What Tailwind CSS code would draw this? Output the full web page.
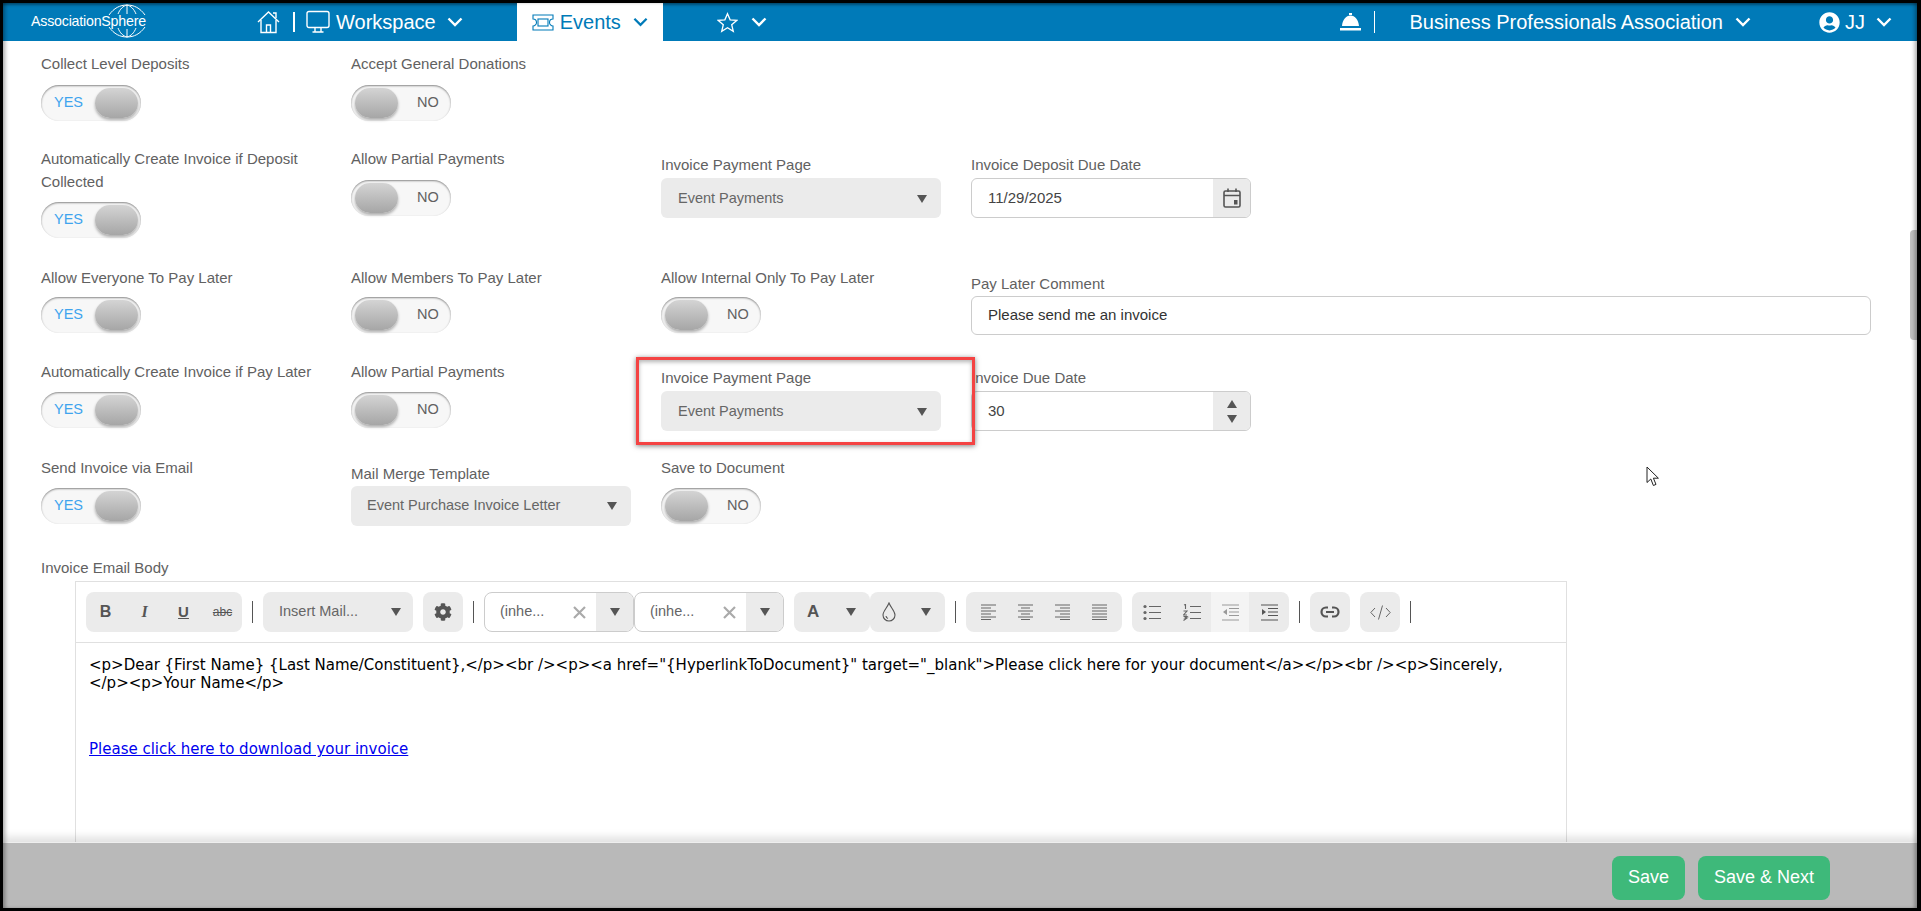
<!DOCTYPE html>
<html lang="en">
<head>
  <meta charset="UTF-8" />
  <title>Event Settings</title>
  <meta name="viewport" content="width=device-width, initial-scale=1.0" />
  <script src="https://cdn.jsdelivr.net/npm/@tailwindcss/browser@4"></script>
</head>
<body class="bg-black h-[911px] overflow-hidden font-['Liberation_Sans',Arial,sans-serif]">
<div class="relative h-[911px] border-t-[3px] border-l-[3px] border-r-[4px] border-b-[3px] border-black bg-white flex flex-col overflow-hidden">

  <!-- top nav -->
  <header class="h-[38px] shrink-0 bg-[#007ab8] text-white flex items-stretch text-[20px] shadow-[inset_0_3px_3px_-1px_rgba(0,0,0,0.35)]">
    <div class="w-[130px] ml-[28px] relative flex items-center shrink-0">
      <span class="text-[14.2px] tracking-[-0.2px] z-10">AssociationSphere</span>
      <svg class="absolute left-[75px] top-[1px] w-[42px] h-[34px]" viewBox="0 0 42 34" fill="none" stroke="white" stroke-width="1">
        <path d="M3 11 C8 4 14 1 21 1 C28 1 34 4 39 11" /><path d="M12 10 C14 5 17 2 21 1 C25 2 28 5 30 10" /><path d="M21 1 V10" />
        <path d="M3 23 C8 30 14 33 21 33 C28 33 34 30 39 23" /><path d="M12 24 C14 29 17 32 21 33 C25 32 28 29 30 24" /><path d="M21 25 V33" />
      </svg>
    </div>
    <svg class="w-[23px] h-[24px] ml-[96px] self-center shrink-0" viewBox="0 0 23 24" fill="none" stroke="white" stroke-width="1.4">
      <path d="M1 12 L11.5 2 L22 12" /><path d="M4 10 V22.5 H19 V10" /><path d="M9.5 22.5 V15 H13.5 V22.5" /><path d="M16 3 H19 V8" />
    </svg>
    <span class="w-[2px] h-[20px] bg-white ml-[13px] self-center shrink-0"></span>
    <svg class="w-[24px] h-[24px] ml-[11px] self-center shrink-0" viewBox="0 0 24 24" fill="none" stroke="white" stroke-width="1.4">
      <rect x="1" y="1.5" width="22" height="16" rx="2" /><path d="M9 18 V21.5 M15 18 V21.5 M6.5 22 H17.5" />
    </svg>
    <span class="ml-[6px] self-center">Workspace</span>
    <svg class="w-[16px] h-[10px] ml-[11px] self-center shrink-0" viewBox="0 0 16 10" fill="none" stroke="white" stroke-width="2.4"><path d="M1.5 1.5 L8 8 L14.5 1.5" /></svg>

    <div class="w-[146px] ml-[54px] bg-white text-[#007ab8] flex items-center shrink-0">
      <svg class="w-[22px] h-[17px] ml-[15px] shrink-0" viewBox="0 0 22 17" fill="none" stroke="#007ab8" stroke-width="1.1">
        <path d="M1 1 H21 V5 A3.5 3.5 0 0 0 21 12 V16 H1 V12 A3.5 3.5 0 0 0 1 5 Z" /><rect x="6" y="5" width="10" height="7" />
      </svg>
      <span class="ml-[6px]">Events</span>
      <svg class="w-[15px] h-[10px] ml-[12px] shrink-0" viewBox="0 0 16 10" fill="none" stroke="#007ab8" stroke-width="2.4"><path d="M1.5 1.5 L8 8 L14.5 1.5" /></svg>
    </div>

    <svg class="w-[21px] h-[21px] ml-[54px] self-center shrink-0" viewBox="0 0 24 24" fill="none" stroke="white" stroke-width="1.5">
      <path d="M12 2 L15 9 L22.5 9.6 L16.8 14.5 L18.6 22 L12 18 L5.4 22 L7.2 14.5 L1.5 9.6 L9 9 Z" />
    </svg>
    <svg class="w-[16px] h-[10px] ml-[13px] self-center shrink-0" viewBox="0 0 16 10" fill="none" stroke="white" stroke-width="2.4"><path d="M1.5 1.5 L8 8 L14.5 1.5" /></svg>

    <svg class="w-[21px] h-[18px] ml-auto self-center shrink-0" viewBox="0 0 21 18" fill="white">
      <path d="M9 0 H12 V2 H9 Z M10.5 2.5 C15 2.5 18.5 7 19 13 H2 C2.5 7 6 2.5 10.5 2.5 Z M0 15 H21 V17.5 H0 Z" />
    </svg>
    <span class="w-px h-[22px] bg-white ml-[13px] self-center shrink-0"></span>
    <span class="ml-[35px] self-center">Business Professionals Association</span>
    <svg class="w-[16px] h-[10px] ml-[12px] self-center shrink-0" viewBox="0 0 16 10" fill="none" stroke="white" stroke-width="2.4"><path d="M1.5 1.5 L8 8 L14.5 1.5" /></svg>
    <svg class="w-[21px] h-[21px] ml-[68px] self-center shrink-0" viewBox="0 0 496 512" fill="white">
      <path d="M248 8C111 8 0 119 0 256s111 248 248 248 248-111 248-248S385 8 248 8zm0 96c48.6 0 88 39.4 88 88s-39.4 88-88 88-88-39.4-88-88 39.4-88 88-88zm0 344c-58.7 0-111.3-26.6-146.5-68.2 18.8-35.4 55.6-59.8 98.5-59.8 2.4 0 4.8.4 7.1 1.1 13 4.2 26.6 6.9 40.9 6.9 14.3 0 28-2.7 40.9-6.9 2.3-.7 4.7-1.1 7.1-1.1 42.9 0 79.7 24.4 98.5 59.8C359.3 421.4 306.7 448 248 448z" />
    </svg>
    <span class="ml-[5px] self-center">JJ</span>
    <svg class="w-[16px] h-[10px] ml-[11px] mr-[25px] self-center shrink-0" viewBox="0 0 16 10" fill="none" stroke="white" stroke-width="2.4"><path d="M1.5 1.5 L8 8 L14.5 1.5" /></svg>
  </header>

  <!-- form -->
  <main class="flex-1 min-h-0 overflow-hidden relative pl-[38px] pt-[11px] text-[14.5px] text-[#616161]">

    <div class="grid grid-cols-[310px_310px_310px_900px] h-[95px]">
      <div>
        <div class="h-[23px] leading-[23px] text-[15px]">Collect Level Deposits</div>
        <div class="mt-[10px] w-[100px] h-[36px] rounded-full bg-[#f7f7f7] shadow-[inset_0_1px_2px_rgba(0,0,0,0.45)] flex items-center">
          <span class="ml-[13px] text-[#3fa4ee]">YES</span>
          <span class="ml-[12px] w-[43px] h-[30px] rounded-full bg-gradient-to-b from-[#d4d4d4] to-[#a6a6a6] shadow-[0_2px_3px_rgba(0,0,0,0.3)]"></span>
        </div>
      </div>
      <div>
        <div class="h-[23px] leading-[23px] text-[15px]">Accept General Donations</div>
        <div class="mt-[10px] w-[100px] h-[36px] rounded-full bg-[#f7f7f7] shadow-[inset_0_1px_2px_rgba(0,0,0,0.45)] flex items-center">
          <span class="ml-[4px] w-[43px] h-[30px] rounded-full bg-gradient-to-b from-[#d4d4d4] to-[#a6a6a6] shadow-[0_2px_3px_rgba(0,0,0,0.3)]"></span>
          <span class="ml-[19px]">NO</span>
        </div>
      </div>
    </div>

    <div class="grid grid-cols-[310px_310px_310px_900px] h-[119px]">
      <div>
        <div class="w-[270px] leading-[23px] text-[15px]">Automatically Create Invoice if Deposit Collected</div>
        <div class="mt-[9px] w-[100px] h-[36px] rounded-full bg-[#f7f7f7] shadow-[inset_0_1px_2px_rgba(0,0,0,0.45)] flex items-center">
          <span class="ml-[13px] text-[#3fa4ee]">YES</span>
          <span class="ml-[12px] w-[43px] h-[30px] rounded-full bg-gradient-to-b from-[#d4d4d4] to-[#a6a6a6] shadow-[0_2px_3px_rgba(0,0,0,0.3)]"></span>
        </div>
      </div>
      <div>
        <div class="h-[23px] leading-[23px] text-[15px]">Allow Partial Payments</div>
        <div class="mt-[10px] w-[100px] h-[36px] rounded-full bg-[#f7f7f7] shadow-[inset_0_1px_2px_rgba(0,0,0,0.45)] flex items-center">
          <span class="ml-[4px] w-[43px] h-[30px] rounded-full bg-gradient-to-b from-[#d4d4d4] to-[#a6a6a6] shadow-[0_2px_3px_rgba(0,0,0,0.3)]"></span>
          <span class="ml-[19px]">NO</span>
        </div>
      </div>
      <div class="pt-[6px]">
        <div class="h-[23px] leading-[23px] text-[15px]">Invoice Payment Page</div>
        <div class="mt-[2px] w-[280px] h-[40px] rounded-md bg-[#ebebeb] flex items-center justify-between pl-[17px] pr-[14px] pt-[2px] text-[#666]">
          <span>Event Payments</span><span class="w-0 h-0 border-x-[5px] border-x-transparent border-t-[8px] border-t-[#555]"></span>
        </div>
      </div>
      <div class="pt-[6px]">
        <div class="h-[23px] leading-[23px] text-[15px]">Invoice Deposit Due Date</div>
        <div class="mt-[2px] w-[280px] h-[40px] rounded-md border border-[#ccc] flex items-stretch overflow-hidden text-[#444] text-[15px]">
          <span class="flex-1 pl-[16px] self-center">11/29/2025</span>
          <span class="w-[37px] bg-[#ebebeb] flex items-center justify-center">
            <svg class="w-[18px] h-[20px]" viewBox="0 0 18 20" fill="none" stroke="#555" stroke-width="1.6">
              <rect x="1" y="3" width="16" height="16" rx="1.5" /><path d="M1 7.5 H17 M5 0.5 V4 M13 0.5 V4" /><rect x="11" y="12" width="3.5" height="4.5" fill="#555" stroke="none" />
            </svg>
          </span>
        </div>
      </div>
    </div>

    <div class="grid grid-cols-[310px_310px_310px_900px] h-[94px]">
      <div>
        <div class="h-[23px] leading-[23px] text-[15px]">Allow Everyone To Pay Later</div>
        <div class="mt-[8px] w-[100px] h-[36px] rounded-full bg-[#f7f7f7] shadow-[inset_0_1px_2px_rgba(0,0,0,0.45)] flex items-center">
          <span class="ml-[13px] text-[#3fa4ee]">YES</span>
          <span class="ml-[12px] w-[43px] h-[30px] rounded-full bg-gradient-to-b from-[#d4d4d4] to-[#a6a6a6] shadow-[0_2px_3px_rgba(0,0,0,0.3)]"></span>
        </div>
      </div>
      <div>
        <div class="h-[23px] leading-[23px] text-[15px]">Allow Members To Pay Later</div>
        <div class="mt-[8px] w-[100px] h-[36px] rounded-full bg-[#f7f7f7] shadow-[inset_0_1px_2px_rgba(0,0,0,0.45)] flex items-center">
          <span class="ml-[4px] w-[43px] h-[30px] rounded-full bg-gradient-to-b from-[#d4d4d4] to-[#a6a6a6] shadow-[0_2px_3px_rgba(0,0,0,0.3)]"></span>
          <span class="ml-[19px]">NO</span>
        </div>
      </div>
      <div>
        <div class="h-[23px] leading-[23px] text-[15px]">Allow Internal Only To Pay Later</div>
        <div class="mt-[8px] w-[100px] h-[36px] rounded-full bg-[#f7f7f7] shadow-[inset_0_1px_2px_rgba(0,0,0,0.45)] flex items-center">
          <span class="ml-[4px] w-[43px] h-[30px] rounded-full bg-gradient-to-b from-[#d4d4d4] to-[#a6a6a6] shadow-[0_2px_3px_rgba(0,0,0,0.3)]"></span>
          <span class="ml-[19px]">NO</span>
        </div>
      </div>
      <div class="pt-[6px]">
        <div class="h-[23px] leading-[23px] text-[15px]">Pay Later Comment</div>
        <div class="mt-[1px] w-[900px] h-[39px] rounded-md border border-[#ccc] flex items-center pl-[16px] text-[#333] text-[15px]">Please send me an invoice</div>
      </div>
    </div>

    <div class="grid grid-cols-[310px_310px_310px_900px] h-[96px]">
      <div>
        <div class="h-[23px] leading-[23px] text-[15px]">Automatically Create Invoice if Pay Later</div>
        <div class="mt-[9px] w-[100px] h-[36px] rounded-full bg-[#f7f7f7] shadow-[inset_0_1px_2px_rgba(0,0,0,0.45)] flex items-center">
          <span class="ml-[13px] text-[#3fa4ee]">YES</span>
          <span class="ml-[12px] w-[43px] h-[30px] rounded-full bg-gradient-to-b from-[#d4d4d4] to-[#a6a6a6] shadow-[0_2px_3px_rgba(0,0,0,0.3)]"></span>
        </div>
      </div>
      <div>
        <div class="h-[23px] leading-[23px] text-[15px]">Allow Partial Payments</div>
        <div class="mt-[9px] w-[100px] h-[36px] rounded-full bg-[#f7f7f7] shadow-[inset_0_1px_2px_rgba(0,0,0,0.45)] flex items-center">
          <span class="ml-[4px] w-[43px] h-[30px] rounded-full bg-gradient-to-b from-[#d4d4d4] to-[#a6a6a6] shadow-[0_2px_3px_rgba(0,0,0,0.3)]"></span>
          <span class="ml-[19px]">NO</span>
        </div>
      </div>
      <div class="pt-[6px]">
        <div class="h-[23px] leading-[23px] text-[15px]">Invoice Payment Page</div>
        <div class="mt-[2px] w-[280px] h-[40px] rounded-md bg-[#ebebeb] flex items-center justify-between pl-[17px] pr-[14px] pt-[2px] text-[#666]">
          <span>Event Payments</span><span class="w-0 h-0 border-x-[5px] border-x-transparent border-t-[8px] border-t-[#555]"></span>
        </div>
      </div>
      <div class="pt-[6px]">
        <div class="h-[23px] leading-[23px] text-[15px]">Invoice Due Date</div>
        <div class="mt-[2px] w-[280px] h-[40px] rounded-md border border-[#ccc] flex items-stretch overflow-hidden text-[#444] text-[15px]">
          <span class="flex-1 pl-[16px] self-center">30</span>
          <span class="w-[37px] bg-[#ebebeb] flex flex-col items-center justify-center gap-[7px]">
            <span class="w-0 h-0 border-x-[5px] border-x-transparent border-b-[8px] border-b-[#555]"></span>
            <span class="w-0 h-0 border-x-[5px] border-x-transparent border-t-[8px] border-t-[#555]"></span>
          </span>
        </div>
      </div>
    </div>

    <div class="grid grid-cols-[310px_310px_310px_900px] h-[100px]">
      <div>
        <div class="h-[23px] leading-[23px] text-[15px]">Send Invoice via Email</div>
        <div class="mt-[9px] w-[100px] h-[36px] rounded-full bg-[#f7f7f7] shadow-[inset_0_1px_2px_rgba(0,0,0,0.45)] flex items-center">
          <span class="ml-[13px] text-[#3fa4ee]">YES</span>
          <span class="ml-[12px] w-[43px] h-[30px] rounded-full bg-gradient-to-b from-[#d4d4d4] to-[#a6a6a6] shadow-[0_2px_3px_rgba(0,0,0,0.3)]"></span>
        </div>
      </div>
      <div class="pt-[6px]">
        <div class="h-[23px] leading-[23px] text-[15px]">Mail Merge Template</div>
        <div class="mt-[1px] w-[280px] h-[40px] rounded-md bg-[#ebebeb] flex items-center justify-between pl-[16px] pr-[14px] text-[#666]">
          <span>Event Purchase Invoice Letter</span><span class="w-0 h-0 border-x-[5px] border-x-transparent border-t-[8px] border-t-[#555]"></span>
        </div>
      </div>
      <div>
        <div class="h-[23px] leading-[23px] text-[15px]">Save to Document</div>
        <div class="mt-[9px] w-[100px] h-[36px] rounded-full bg-[#f7f7f7] shadow-[inset_0_1px_2px_rgba(0,0,0,0.45)] flex items-center">
          <span class="ml-[4px] w-[43px] h-[30px] rounded-full bg-gradient-to-b from-[#d4d4d4] to-[#a6a6a6] shadow-[0_2px_3px_rgba(0,0,0,0.3)]"></span>
          <span class="ml-[19px]">NO</span>
        </div>
      </div>
    </div>

    <div class="h-[23px] leading-[23px] text-[15px]">Invoice Email Body</div>

    <!-- editor -->
    <div class="ml-[34px] mt-[2px] w-[1492px] h-[400px] border border-[#e0e0e0]">
      <div class="h-[61px] border-b border-[#e0e0e0] flex items-center pl-[10px] gap-[10px] text-[#666]">
        <div class="w-[156px] h-[40px] rounded-lg bg-[#ebebeb] flex items-center text-[#555]">
          <span class="w-[39px] text-center font-bold text-[16px]">B</span>
          <span class="w-[39px] text-center italic text-[16px] font-['Liberation_Serif',serif] font-bold">I</span>
          <span class="w-[39px] text-center underline font-bold text-[15px]">U</span>
          <span class="w-[39px] text-center line-through text-[12px]">abc</span>
        </div>
        <span class="w-px h-[22px] bg-[#555]"></span>
        <div class="w-[150px] h-[40px] rounded-lg bg-[#ebebeb] flex items-center justify-between pl-[16px] pr-[12px]">
          <span>Insert Mail...</span><span class="w-0 h-0 border-x-[5px] border-x-transparent border-t-[8px] border-t-[#555]"></span>
        </div>
        <div class="w-[40px] h-[40px] rounded-lg bg-[#ebebeb] flex items-center justify-center">
          <svg class="w-[18px] h-[18px]" viewBox="0 0 512 512" fill="#555">
            <path d="M487.4 315.7l-42.6-24.6c4.3-23.2 4.3-47 0-70.2l42.6-24.6c4.9-2.8 7.1-8.6 5.5-14-11.1-35.6-30-67.8-54.7-94.6-3.8-4.1-10-5.1-14.8-2.3L380.8 110c-17.9-15.4-38.5-27.3-60.8-35.1V25.8c0-5.6-3.9-10.5-9.4-11.7-36.7-8.2-74.3-7.8-109.2 0-5.5 1.2-9.4 6.1-9.4 11.7V75c-22.2 7.9-42.8 19.8-60.8 35.1L88.7 85.5c-4.9-2.8-11-1.9-14.8 2.3-24.7 26.7-43.6 58.9-54.7 94.6-1.7 5.4.6 11.2 5.5 14L67.3 221c-4.3 23.2-4.3 47 0 70.2l-42.6 24.6c-4.9 2.8-7.1 8.6-5.5 14 11.1 35.6 30 67.8 54.7 94.6 3.8 4.1 10 5.1 14.8 2.3l42.6-24.6c17.9 15.4 38.5 27.3 60.8 35.1v49.2c0 5.6 3.9 10.5 9.4 11.7 36.7 8.2 74.3 7.8 109.2 0 5.5-1.2 9.4-6.1 9.4-11.7v-49.2c22.2-7.9 42.8-19.8 60.8-35.1l42.6 24.6c4.9 2.8 11 1.9 14.8-2.3 24.7-26.7 43.6-58.9 54.7-94.6 1.5-5.5-.7-11.3-5.6-14.1zM256 336c-44.1 0-80-35.9-80-80s35.9-80 80-80 80 35.9 80 80-35.9 80-80 80z" />
          </svg>
        </div>
        <span class="w-px h-[22px] bg-[#555]"></span>
        <div class="flex">
          <div class="w-[150px] h-[40px] rounded-lg border border-[#ccc] flex items-stretch overflow-hidden">
            <span class="w-[88px] pl-[15px] self-center">(inhe...</span>
            <svg class="w-[13px] h-[13px] self-center" viewBox="0 0 13 13" stroke="#aaa" stroke-width="2.2"><path d="M1 1 L12 12 M12 1 L1 12" /></svg>
            <span class="ml-auto w-[37px] bg-[#ebebeb] flex items-center justify-center"><span class="w-0 h-0 border-x-[5px] border-x-transparent border-t-[8px] border-t-[#555]"></span></span>
          </div>
          <div class="w-[150px] h-[40px] rounded-lg border border-[#ccc] flex items-stretch overflow-hidden">
            <span class="w-[88px] pl-[15px] self-center">(inhe...</span>
            <svg class="w-[13px] h-[13px] self-center" viewBox="0 0 13 13" stroke="#aaa" stroke-width="2.2"><path d="M1 1 L12 12 M12 1 L1 12" /></svg>
            <span class="ml-auto w-[37px] bg-[#ebebeb] flex items-center justify-center"><span class="w-0 h-0 border-x-[5px] border-x-transparent border-t-[8px] border-t-[#555]"></span></span>
          </div>
        </div>
        <div class="flex">
          <div class="w-[76px] h-[40px] rounded-lg bg-[#ebebeb] flex items-center justify-between pl-[13px] pr-[14px]">
            <span class="font-bold text-[17px] text-[#555]">A</span><span class="w-0 h-0 border-x-[5px] border-x-transparent border-t-[8px] border-t-[#555]"></span>
          </div>
          <div class="w-[75px] h-[40px] rounded-lg bg-[#ebebeb] flex items-center justify-between pl-[12px] pr-[14px]">
            <svg class="w-[14px] h-[20px]" viewBox="0 0 14 20" fill="none" stroke="#555" stroke-width="1.1"><path d="M7 1 C9 6 13 9 13 13 A6 6 0 0 1 1 13 C1 9 5 6 7 1 Z" /><path d="M4 14 A3 3 0 0 0 6 16.5" /></svg>
            <span class="w-0 h-0 border-x-[5px] border-x-transparent border-t-[8px] border-t-[#555]"></span>
          </div>
        </div>
        <span class="w-px h-[22px] bg-[#555]"></span>
        <div class="w-[156px] h-[40px] rounded-lg bg-[#ebebeb] flex items-center justify-around px-[4px]">
          <svg class="w-[15px] h-[16px]" viewBox="0 0 15 16" stroke="#666" stroke-width="1.2"><path d="M0 1 H15 M0 4 H10 M0 7 H15 M0 10 H10 M0 13 H15 M0 15.5 H10" /></svg>
          <svg class="w-[15px] h-[16px]" viewBox="0 0 15 16" stroke="#666" stroke-width="1.2"><path d="M0 1 H15 M3 4 H12 M0 7 H15 M3 10 H12 M0 13 H15 M3 15.5 H12" /></svg>
          <svg class="w-[15px] h-[16px]" viewBox="0 0 15 16" stroke="#666" stroke-width="1.2"><path d="M0 1 H15 M5 4 H15 M0 7 H15 M5 10 H15 M0 13 H15 M5 15.5 H15" /></svg>
          <svg class="w-[15px] h-[16px]" viewBox="0 0 15 16" stroke="#666" stroke-width="1.2"><path d="M0 1 H15 M0 4 H15 M0 7 H15 M0 10 H15 M0 13 H15 M0 15.5 H15" /></svg>
        </div>
        <div class="w-[157px] h-[40px] rounded-lg bg-[#ebebeb] flex items-stretch overflow-hidden">
          <span class="w-[40px] flex items-center justify-center">
            <svg class="w-[18px] h-[17px]" viewBox="0 0 18 17" fill="#666" stroke="#666" stroke-width="1.2"><circle cx="2" cy="2.5" r="1.6" stroke="none" /><circle cx="2" cy="8.5" r="1.6" stroke="none" /><circle cx="2" cy="14.5" r="1.6" stroke="none" /><path d="M6 2.5 H18 M6 8.5 H18 M6 14.5 H18" /></svg>
          </span>
          <span class="w-[39px] flex items-center justify-center">
            <svg class="w-[18px] h-[17px]" viewBox="0 0 18 17" stroke="#666" stroke-width="1.1" fill="none"><path d="M1 1 L2.5 0.5 V5 M0.5 7 H4 L0.5 11 H4 M0.5 12.5 H4 L2 14 H4 L0.5 16.5 M7 2.5 H18 M7 8.5 H18 M7 14.5 H18" /></svg>
          </span>
          <span class="w-[38px] bg-[#f4f4f4] flex items-center justify-center">
            <svg class="w-[17px] h-[17px]" viewBox="0 0 17 17" stroke="#999" stroke-width="1.2" fill="#999"><path d="M0 1 H17 M7 4.5 H17 M7 8 H17 M7 11.5 H17 M0 16 H17" /><path d="M5 5 V11 L1 8 Z" stroke="none" /></svg>
          </span>
          <span class="w-[40px] flex items-center justify-center">
            <svg class="w-[17px] h-[17px]" viewBox="0 0 17 17" stroke="#555" stroke-width="1.2" fill="#555"><path d="M0 1 H17 M7 4.5 H17 M7 8 H17 M7 11.5 H17 M0 16 H17" /><path d="M1 5 V11 L5 8 Z" stroke="none" /></svg>
          </span>
        </div>
        <span class="w-px h-[22px] bg-[#555]"></span>
        <div class="w-[40px] h-[40px] rounded-lg bg-[#ebebeb] flex items-center justify-center">
          <svg class="w-[20px] h-[12px]" viewBox="0 0 20 12" fill="none" stroke="#555" stroke-width="2.2"><path d="M8 1.5 H6 A4.5 4.5 0 0 0 6 10.5 H8 M12 1.5 H14 A4.5 4.5 0 0 1 14 10.5 H12 M6 6 H14" /></svg>
        </div>
        <div class="w-[40px] h-[40px] rounded-lg bg-[#ebebeb] flex items-center justify-center">
          <svg class="w-[21px] h-[15px]" viewBox="0 0 21 15" fill="none" stroke="#666" stroke-width="1"><path d="M5 3 L0.8 7.5 L5 12 M16 3 L20.2 7.5 L16 12 M12.5 0.5 L8.5 14.5" /></svg>
        </div>
        <span class="w-px h-[22px] bg-[#555]"></span>
      </div>
      <div class="px-[13px] pt-[13px] text-[15px] leading-[18px] text-black font-['DejaVu_Sans',Verdana,sans-serif]">
        <p>&lt;p&gt;Dear {First Name} {Last Name/Constituent},&lt;/p&gt;&lt;br /&gt;&lt;p&gt;&lt;a href="{HyperlinkToDocument}" target="_blank"&gt;Please click here for your document&lt;/a&gt;&lt;/p&gt;&lt;br /&gt;&lt;p&gt;Sincerely,<br />&lt;/p&gt;&lt;p&gt;Your Name&lt;/p&gt;</p>
        <p class="mt-[48px]"><a class="text-[#0000ee] underline">Please click here to download your invoice</a></p>
      </div>
    </div>

    <!-- callout over the second payment page field -->
    <div class="absolute left-[633px] top-[316px] w-[339px] h-[88px] border-[3px] border-[#f44343] shadow-[0_1px_5px_rgba(0,0,0,0.5),inset_0_2px_4px_rgba(0,0,0,0.3)] bg-transparent"></div>

    <!-- mouse pointer -->
    <svg class="absolute left-[1643px] top-[425px] w-[14px] h-[21px]" viewBox="0 0 14 21" fill="white" stroke="#222" stroke-width="1"><path d="M1 1 V16.5 L4.8 13 L7.4 19.5 L10 18.4 L7.4 12.2 H12.4 Z" /></svg>

    <!-- scrollbar thumb -->
    <div class="absolute right-0 top-[189px] w-[7px] h-[110px] bg-[#c1c1c1] rounded-l-sm"></div>
  </main>

  <!-- bottom action bar -->
  <footer class="h-[66px] shrink-0 z-10 bg-[#b9b9b9] border-t border-[#eee] shadow-[0_-5px_8px_rgba(0,0,0,0.12)] flex items-center justify-end gap-[13px] pr-[87px] pt-[4px] text-white text-[18px]">
    <button class="w-[73px] h-[44px] rounded-lg bg-[#3eb97a]">Save</button>
    <button class="w-[132px] h-[44px] rounded-lg bg-[#3eb97a]">Save &amp; Next</button>
  </footer>

  <!-- screenshot edge shade -->
  <div class="absolute inset-0 z-20 pointer-events-none shadow-[inset_4px_0_4px_-2px_rgba(0,0,0,0.35),inset_-4px_0_4px_-2px_rgba(0,0,0,0.35)]"></div>
</div>
</body>
</html>
